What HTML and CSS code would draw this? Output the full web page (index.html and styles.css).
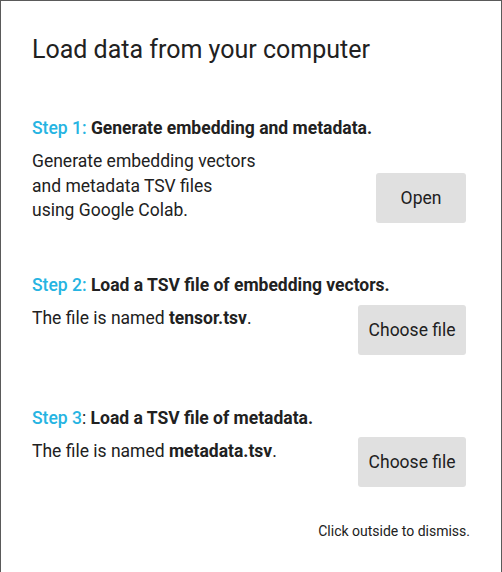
FILE: index.html
```html
<!DOCTYPE html>
<html>
<head>
<meta charset="utf-8">
<link rel="stylesheet" href="styles.css">
</head>
<body>
<div class="dialog">
  <h2 class="title">Load data from your computer</h2>

  <section class="step step--first">
    <div class="step-heading"><span class="step-label">Step 1:</span> Generate embedding and metadata.</div>
    <div class="step-row step-row--end">
      <div class="step-text">Generate embedding vectors<br>and metadata TSV files<br>using Google Colab.</div>
      <button class="btn">Open</button>
    </div>
  </section>

  <section class="step">
    <div class="step-heading"><span class="step-label">Step 2:</span> Load a TSV file of embedding vectors.</div>
    <div class="step-row">
      <div class="step-text">The file is named <b>tensor.tsv</b>.</div>
      <button class="btn btn--file">Choose file</button>
    </div>
  </section>

  <section class="step step--third">
    <div class="step-heading"><span class="step-label">Step 3</span><span class="step-colon">:</span> Load a TSV file of metadata.</div>
    <div class="step-row">
      <div class="step-text">The file is named <b>metadata.tsv</b>.</div>
      <button class="btn btn--file">Choose file</button>
    </div>
  </section>

  <div class="dismiss">Click outside to dismiss.</div>
</div>
</body>
</html>
```

FILE: styles.css
```css
html, body {
  margin: 0;
  padding: 0;
  background: #ffffff;
}

body {
  font-family: Roboto, "Noto Sans", sans-serif;
  color: #212121;
  height: 572px;
  overflow: hidden;
}

.dialog {
  box-sizing: border-box;
  width: 502px;
  min-height: 600px;
  border: 1px solid #5a5a5a;
  border-bottom: none;
  padding: 33px 31px 0 31px;
  background: #fff;
}

.title {
  margin: 0;
  font-size: 25px;
  line-height: 32px;
  font-weight: 400;
  color: #212121;
}

.step {
  margin-top: 50px;
}

.step--third {
  margin-top: 51px;
}

.step-heading {
  font-size: 17.5px;
  line-height: 24.5px;
  font-weight: 700;
  color: #212121;
}

.step-label {
  color: #26b4e2;
  font-weight: 500;
}

.step-colon {
  font-weight: 400;
  color: #212121;
}

.step-row {
  display: flex;
  justify-content: space-between;
  align-items: flex-start;
  margin-top: 9px;
  padding-right: 4px;
}

.step-row--end {
  align-items: flex-end;
  margin-top: 8.5px;
}

.step-text {
  font-size: 17.5px;
  line-height: 24.5px;
}

.step-text b {
  font-weight: 700;
}

.btn {
  box-sizing: border-box;
  height: 50px;
  min-width: 90px;
  padding: 0 10.5px;
  border: none;
  border-radius: 3px;
  background: #e0e0e0;
  color: #212121;
  font-family: Roboto, "Noto Sans", sans-serif;
  font-size: 17.5px;
  line-height: 50px;
}

.btn--file {
  margin-top: -1.5px;
}

.step--third .btn--file {
  margin-top: -2.5px;
}

.dismiss {
  margin-top: 34.5px;
  text-align: right;
  font-size: 14px;
  line-height: 20px;
  color: #212121;
}
```
